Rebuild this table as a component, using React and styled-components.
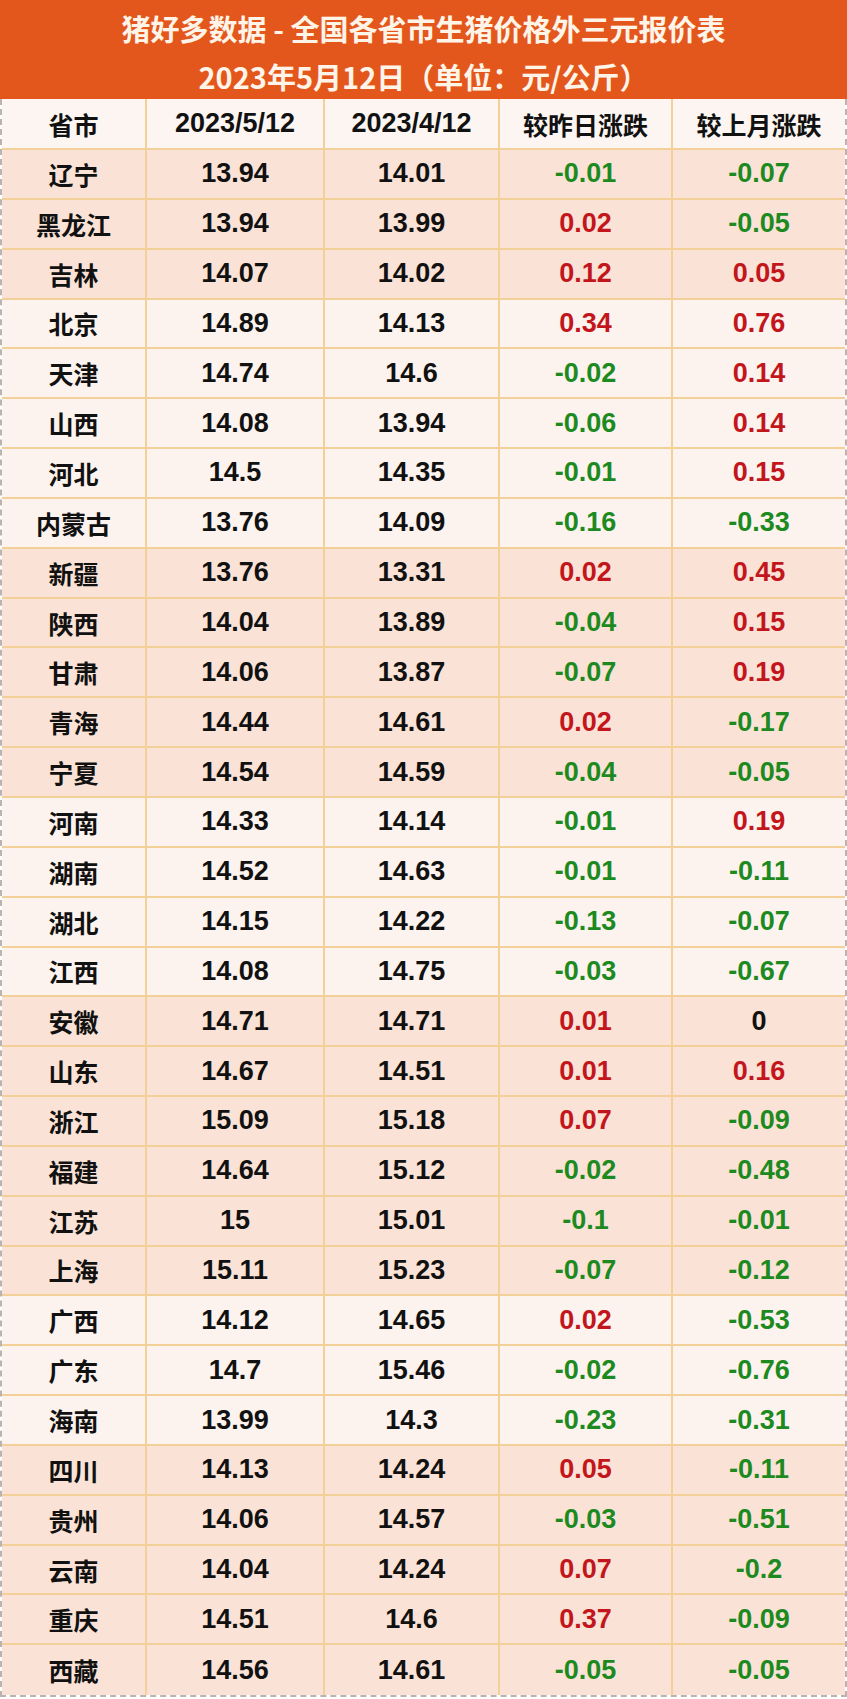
import React from 'react';
import styled, { createGlobalStyle } from 'styled-components';

const GlobalStyle = createGlobalStyle`
  html, body {
    margin: 0;
    padding: 0;
    background: #ffffff;
  }
  * {
    box-sizing: border-box;
  }
`;

const Page = styled.div`
  width: 847px;
  font-family: 'Liberation Sans', 'Noto Sans CJK SC', sans-serif;
`;

const TitleBar = styled.div`
  height: 99px;
  background: #e4571c;
  padding-top: 4px;
  display: flex;
  flex-direction: column;
  align-items: center;
`;

const TitleLine = styled.div`
  height: 48px;
  line-height: 48px;
  font-family: 'Noto Sans CJK SC', sans-serif;
  font-size: 29px;
  font-weight: 700;
  color: #fff4e8;
  white-space: pre;
`;

const Table = styled.div`
  border-left: 2px dashed #b9b4b0;
  border-right: 2px dashed #b9b4b0;
  border-bottom: 2px dashed #b9b4b0;
`;

const Row = styled.div`
  display: grid;
  grid-template-columns: 145px 178px 175px 173px 1fr;
  height: ${(p) => (p.$head ? '51px' : '49.85px')};
  background: ${(p) => p.$bg};
  border-bottom: 2px solid #f4d099;
  &:last-child {
    border-bottom: none;
  }
`;

const Cell = styled.div`
  display: flex;
  align-items: center;
  justify-content: center;
  border-right: 2px solid #f4d099;
  font-size: ${(p) => (p.$cjk ? '25px' : '27px')};
  font-family: ${(p) =>
    p.$cjk ? "'Noto Sans CJK SC', sans-serif" : "'Liberation Sans', 'Noto Sans CJK SC', sans-serif"};
  font-weight: 700;
  color: ${(p) => p.$color || '#111111'};
  &:last-child {
    border-right: none;
  }
`;

const HEADERS = ['省市', '2023/5/12', '2023/4/12', '较昨日涨跌', '较上月涨跌'];

// grouped by region; every other group is shaded peach
const GROUPS = [
  [
    ['辽宁', '13.94', '14.01', '-0.01', '-0.07'],
    ['黑龙江', '13.94', '13.99', '0.02', '-0.05'],
    ['吉林', '14.07', '14.02', '0.12', '0.05'],
  ],
  [
    ['北京', '14.89', '14.13', '0.34', '0.76'],
    ['天津', '14.74', '14.6', '-0.02', '0.14'],
    ['山西', '14.08', '13.94', '-0.06', '0.14'],
    ['河北', '14.5', '14.35', '-0.01', '0.15'],
    ['内蒙古', '13.76', '14.09', '-0.16', '-0.33'],
  ],
  [
    ['新疆', '13.76', '13.31', '0.02', '0.45'],
    ['陕西', '14.04', '13.89', '-0.04', '0.15'],
    ['甘肃', '14.06', '13.87', '-0.07', '0.19'],
    ['青海', '14.44', '14.61', '0.02', '-0.17'],
    ['宁夏', '14.54', '14.59', '-0.04', '-0.05'],
  ],
  [
    ['河南', '14.33', '14.14', '-0.01', '0.19'],
    ['湖南', '14.52', '14.63', '-0.01', '-0.11'],
    ['湖北', '14.15', '14.22', '-0.13', '-0.07'],
    ['江西', '14.08', '14.75', '-0.03', '-0.67'],
  ],
  [
    ['安徽', '14.71', '14.71', '0.01', '0'],
    ['山东', '14.67', '14.51', '0.01', '0.16'],
    ['浙江', '15.09', '15.18', '0.07', '-0.09'],
    ['福建', '14.64', '15.12', '-0.02', '-0.48'],
    ['江苏', '15', '15.01', '-0.1', '-0.01'],
    ['上海', '15.11', '15.23', '-0.07', '-0.12'],
  ],
  [
    ['广西', '14.12', '14.65', '0.02', '-0.53'],
    ['广东', '14.7', '15.46', '-0.02', '-0.76'],
    ['海南', '13.99', '14.3', '-0.23', '-0.31'],
  ],
  [
    ['四川', '14.13', '14.24', '0.05', '-0.11'],
    ['贵州', '14.06', '14.57', '-0.03', '-0.51'],
    ['云南', '14.04', '14.24', '0.07', '-0.2'],
    ['重庆', '14.51', '14.6', '0.37', '-0.09'],
    ['西藏', '14.56', '14.61', '-0.05', '-0.05'],
  ],
];

const changeColor = (v) => {
  const n = Number(v);
  if (n > 0) return '#c3161c';
  if (n < 0) return '#1d8a1f';
  return '#111111';
};

const App = () => {
  return (
    <Page>
      <GlobalStyle />
      <TitleBar>
        <TitleLine>猪好多数据 - 全国各省市生猪价格外三元报价表</TitleLine>
        <TitleLine>2023年5月12日（单位：元/公斤）</TitleLine>
      </TitleBar>
      <Table>
        <Row $head $bg="#fcf5f1">
          {HEADERS.map((h, i) => (
            <Cell key={h} $cjk={i === 0 || i > 2}>
              {h}
            </Cell>
          ))}
        </Row>
        {GROUPS.map((group, gi) =>
          group.map((row) => (
            <Row key={row[0]} $bg={gi % 2 === 0 ? '#fae3d6' : '#fcf3ee'}>
              <Cell $cjk>{row[0]}</Cell>
              <Cell>{row[1]}</Cell>
              <Cell>{row[2]}</Cell>
              <Cell $color={changeColor(row[3])}>{row[3]}</Cell>
              <Cell $color={changeColor(row[4])}>{row[4]}</Cell>
            </Row>
          ))
        )}
      </Table>
    </Page>
  );
};

export default App;
